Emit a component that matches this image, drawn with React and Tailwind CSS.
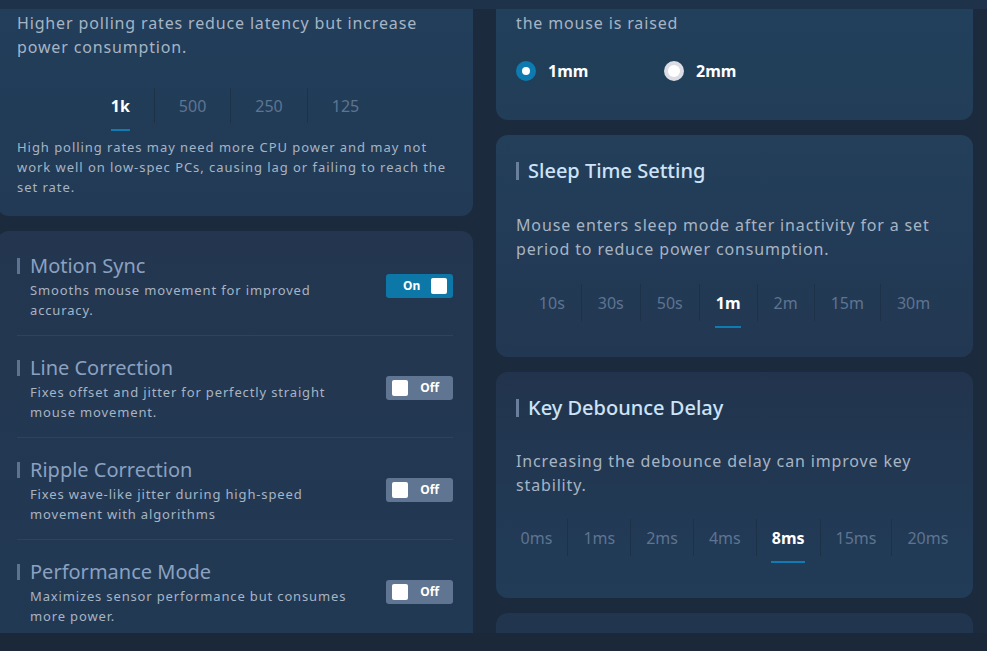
import { useState } from "react"

const font = { fontFamily: '"Noto Sans", "Liberation Sans", sans-serif' }

const Tabs = ({ items, active, pad = "px-6", h = "h-[35px]", gap = "mt-[6px]" }) => (
  <div className="flex justify-center">
    {items.map((it, i) => (
      <div key={it} className="flex flex-col">
        <div
          className={`${h} flex items-center ${pad} ${i > 0 ? "border-l border-[#1d3147]" : ""}`}
        >
          <span
            className={`text-[16px] leading-6 whitespace-nowrap ${
              it === active ? "text-white font-bold" : "text-[#5e7491]"
            }`}
          >
            {it}
          </span>
        </div>
        <div className={`${pad} ${gap}`}>
          <div className={`h-[2px] ${it === active ? "bg-[#0e7cb3]" : "bg-transparent"}`} />
        </div>
      </div>
    ))}
  </div>
)

const Toggle = ({ on }) => (
  <div
    className={`w-[67px] h-[24px] rounded-[3px] flex items-center shrink-0 ${
      on ? "bg-[#0d77a8] justify-between pl-[17px] pr-[6px]" : "bg-[#5f7591] pl-[6px] pr-[14px] justify-between"
    }`}
  >
    {on ? (
      <>
        <span className="text-white text-[12px] font-bold">On</span>
        <span className="w-4 h-4 bg-white rounded-[2px]" />
      </>
    ) : (
      <>
        <span className="w-4 h-4 bg-white rounded-[2px]" />
        <span className="text-white text-[12px] font-bold">Off</span>
      </>
    )}
  </div>
)

const SectionTitle = ({ children }) => (
  <div className="flex items-center gap-[9px]">
    <span className="w-[3px] h-[18px] bg-[#6a7f9b]" />
    <h3 className="text-[20px] leading-7 font-medium text-[#cde3f7]">{children}</h3>
  </div>
)

const features = [
  { title: "Motion Sync", desc: "Smooths mouse movement for improved accuracy.", on: true },
  { title: "Line Correction", desc: "Fixes offset and jitter for perfectly straight mouse movement.", on: false },
  { title: "Ripple Correction", desc: "Fixes wave-like jitter during high-speed movement with algorithms", on: false },
  { title: "Performance Mode", desc: "Maximizes sensor performance but consumes more power.", on: false },
]

export default function App() {
  const [lift] = useState("1mm")

  return (
    <div style={font} className="w-[987px] h-[651px] bg-[#1b283a] overflow-hidden">
      <div className="h-[9px] bg-[#1e3249]" />
      <div className="h-[624px] overflow-hidden bg-[#1c2a3d]">
        <div className="-ml-[3px] w-[976px] grid grid-cols-[476px_477px] gap-[23px] items-start">
          {/* left column */}
          <div className="flex flex-col gap-[15px]">
            <div className="rounded-b-xl bg-gradient-to-b from-[#213e5a] to-[#223a55] px-5 pt-[2px] pb-[19px]">
              <p className="text-[16px] leading-6 tracking-[0.85px] text-[#a7b4c4]">
                Higher polling rates reduce latency but increase power consumption.
              </p>
              <div className="mt-[29px]">
                <Tabs items={["1k", "500", "250", "125"]} active="1k" />
              </div>
              <p className="mt-[6px] text-[13px] leading-5 tracking-[0.95px] text-[#a7b4c4]">
                High polling rates may need more CPU power and may not work well on low-spec PCs, causing lag or failing to reach the set rate.
              </p>
            </div>

            <div className="rounded-t-xl bg-gradient-to-b from-[#24364f] to-[#213954] px-5 pt-[3px] pb-6">
              {features.map((f, i) => (
                <div
                  key={f.title}
                  className={`flex items-center justify-between pt-[18px] pb-[15px] ${
                    i < features.length - 1 ? "border-b border-[#2d4360]" : ""
                  }`}
                >
                  <div>
                    <div className="flex items-center gap-[10px]">
                      <span className="w-[3px] h-4 bg-[#5d7390]" />
                      <h3 className="text-[20px] leading-7 text-[#8ba1c1]">{f.title}</h3>
                    </div>
                    <p className="pl-[13px] w-[340px] text-[13px] leading-5 tracking-[0.85px] text-[#a7b4c4]">
                      {f.desc}
                    </p>
                  </div>
                  <Toggle on={f.on} />
                </div>
              ))}
            </div>
          </div>

          {/* right column */}
          <div className="flex flex-col gap-[15px]">
            <div className="rounded-b-xl bg-gradient-to-b from-[#21405b] to-[#223d58] px-5 pt-[2px] pb-[37px]">
              <p className="text-[16px] leading-6 tracking-[0.85px] text-[#a7b4c4]">the mouse is raised</p>
              <div className="mt-6 flex items-center">
                {["1mm", "2mm"].map((v) => (
                  <div key={v} className="w-[148px] flex items-center gap-3">
                    {v === lift ? (
                      <span className="w-5 h-5 rounded-full bg-[#0d7ab0] flex items-center justify-center">
                        <span className="w-2 h-2 rounded-full bg-white" />
                      </span>
                    ) : (
                      <span className="w-5 h-5 rounded-full bg-[#dcdde4] flex items-center justify-center">
                        <span className="w-3 h-3 rounded-full bg-white" />
                      </span>
                    )}
                    <span className="text-[16px] leading-6 font-bold text-white">{v}</span>
                  </div>
                ))}
              </div>
            </div>

            <div className="rounded-xl bg-gradient-to-b from-[#233f5a] to-[#223752] px-5 pt-[22px] pb-[29px]">
              <SectionTitle>Sleep Time Setting</SectionTitle>
              <p className="mt-[28px] text-[16px] leading-6 tracking-[0.85px] text-[#a7b4c4]">
                Mouse enters sleep mode after inactivity for a set period to reduce power consumption.
              </p>
              <div className="mt-[23px]">
                <Tabs
                  items={["10s", "30s", "50s", "1m", "2m", "15m", "30m"]}
                  active="1m"
                  pad="px-4"
                  h="h-[37px]"
                  gap="mt-[5px]"
                />
              </div>
            </div>

            <div className="rounded-xl bg-gradient-to-b from-[#22344d] to-[#213c58] px-5 pt-[22px] pb-[35px]">
              <SectionTitle>Key Debounce Delay</SectionTitle>
              <p className="mt-[27px] text-[16px] leading-6 tracking-[0.85px] text-[#a7b4c4]">
                Increasing the debounce delay can improve key stability.
              </p>
              <div className="mt-[22px]">
                <Tabs
                  items={["0ms", "1ms", "2ms", "4ms", "8ms", "15ms", "20ms"]}
                  active="8ms"
                  pad="px-[15px]"
                  h="h-[37px]"
                  gap="mt-[5px]"
                />
              </div>
            </div>

            <div className="rounded-t-xl bg-[#22354e] h-[60px]" />
          </div>
        </div>
      </div>
    </div>
  )
}
